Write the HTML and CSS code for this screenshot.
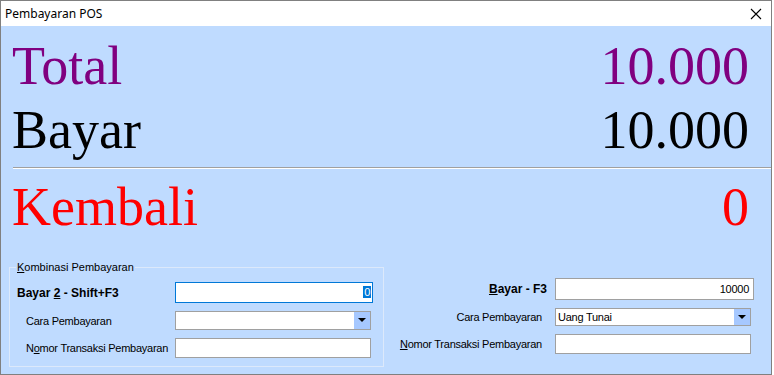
FILE: index.html
```html
<!DOCTYPE html>
<html lang="id">
<head>
  <meta charset="UTF-8" />
  <title>Pembayaran POS</title>
  <link rel="stylesheet" href="styles.css">
</head>
<body>
  <div class="window">
    <div class="title-bar">
      <span class="title">Pembayaran POS</span>
      <span class="close">
        <svg width="12" height="12" viewBox="0 0 12 12"><path d="M1 1 L11 11 M11 1 L1 11" stroke="#000" stroke-width="1.1"/></svg>
      </span>
    </div>

    <div class="content">
      <div class="big-row total"><span>Total</span><span>10.000</span></div>
      <div class="big-row bayar"><span>Bayar</span><span>10.000</span></div>
      <div class="separator"></div>
      <div class="big-row kembali"><span>Kembali</span><span>0</span></div>

      <div class="bottom">
        <fieldset class="group">
          <legend><u>K</u>ombinasi Pembayaran</legend>
          <div class="form left-form">
            <label class="bold">Bayar <u>2</u> - Shift+F3</label>
            <div class="input focused"><span class="sel">0</span></div>

            <label class="indent">Cara Pembayaran</label>
            <div class="combo narrow"><span class="value"></span><span class="drop"></span></div>

            <label class="indent">N<u>o</u>mor Transaksi Pembayaran</label>
            <div class="input narrow"></div>
          </div>
        </fieldset>

        <div class="form right-form">
          <label class="bold"><u>B</u>ayar - F3</label>
          <div class="input tall">10000</div>

          <label>Cara Pembayaran</label>
          <div class="combo narrow short"><span class="value">Uang Tunai</span><span class="drop"></span></div>

          <label><u>N</u>omor Transaksi Pembayaran</label>
          <div class="input narrow"></div>
        </div>
      </div>
    </div>
  </div>
</body>
</html>
```

FILE: styles.css
```css
body {
  margin: 0;
  background: #ffffff;
  font-family: 'Liberation Sans', Arial, sans-serif;
}

.window {
  width: 770px;
  height: 373px;
  border: 1px solid #808080;
  display: flex;
  flex-direction: column;
}

.title-bar {
  height: 25px;
  background: #ffffff;
  display: flex;
  align-items: center;
  justify-content: space-between;
  padding: 0 9px 0 4px;
}

.title {
  font-family: 'Noto Sans', sans-serif;
  font-size: 12px;
  color: #000;
}

.close {
  display: flex;
}

.content {
  flex: 1;
  background: #bfdbff;
  padding-top: 8px;
}

.big-row {
  display: flex;
  justify-content: space-between;
  font-family: 'Liberation Serif', 'Times New Roman', serif;
  font-size: 54px;
  line-height: 64px;
  padding: 0 22px 0 11px;
}

.total { color: #800080; }
.bayar { color: #000000; }
.kembali { color: #ff0000; margin-top: 6px; }

.separator {
  margin: 5px 0 0 12px;
  height: 1px;
  background: #a0a0a0;
  border-bottom: 1px solid #ffffff;
}

.bottom {
  display: flex;
  align-items: flex-start;
  margin-top: 22px;
}

.group {
  margin: 0 0 0 8px;
  width: 375px;
  height: 106px;
  box-sizing: border-box;
  border: 1px solid #dce9fb;
  padding: 11px 0 0 7px;
}

.group legend {
  font-size: 11px;
  padding: 0 1px;
  margin-left: -1px;
  color: #000;
}

.form {
  display: grid;
  font-size: 11px;
  letter-spacing: -0.25px;
  color: #000;
  align-items: center;
}

.left-form {
  grid-template-columns: 158px 198px;
  row-gap: 8px;
  margin-top: -2px;
}

.right-form {
  grid-template-columns: 157px 199px;
  row-gap: 8px;
  margin: 17px 0 0 6px;
  column-gap: 8px;
}

.right-form label {
  text-align: right;
  padding-right: 5px;
}

.right-form label.bold {
  padding-right: 0;
}

.bold {
  font-weight: bold;
  font-size: 12px;
  letter-spacing: 0;
}

.left-form .indent {
  padding-left: 9px;
}

.input {
  height: 20px;
  box-sizing: border-box;
  background: #ffffff;
  border: 1px solid #a0a0a0;
  text-align: right;
  padding: 2px 4px;
  line-height: 14px;
}

.input.tall {
  height: 22px;
  padding: 3px 4px;
}

.input.focused {
  border-color: #0078d7;
  height: 21px;
  padding: 2px 1px;
}

.sel {
  background: #0078d7;
  color: #ffffff;
  padding: 0 1px;
}

.narrow {
  width: 196px;
}

.combo {
  height: 19px;
  box-sizing: border-box;
  background: #ffffff;
  border: 1px solid #a0a0a0;
  display: flex;
  justify-content: space-between;
  line-height: 17px;
}

.combo.short {
  height: 18px;
  line-height: 16px;
}

.combo .value {
  padding-left: 2px;
}

.drop {
  width: 16px;
  background: #a6c8ff;
  position: relative;
}

.drop::after {
  content: '';
  position: absolute;
  left: 4px;
  top: 6px;
  border-left: 4px solid transparent;
  border-right: 4px solid transparent;
  border-top: 4px solid #000;
}
```
